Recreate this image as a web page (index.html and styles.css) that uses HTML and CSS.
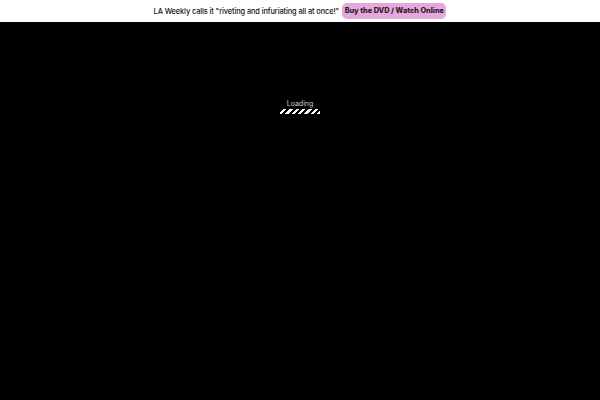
FILE: index.html
```html
<!DOCTYPE html>
<html>
<head>
<meta charset="utf-8">
<link rel="stylesheet" href="styles.css">
</head>
<body>
<div class="banner">
  <span class="quote">LA Weekly calls it "riveting and infuriating all at once!"</span>
  <a class="cta" href="#">Buy the DVD / Watch Online</a>
</div>
<main class="stage">
  <div class="loader">
    <div class="loader-text">Loading</div>
    <div class="loader-bar"></div>
  </div>
</main>
</body>
</html>
```
FILE: styles.css
```css
html, body {
  margin: 0;
  padding: 0;
  height: 100%;
  background: #000;
  font-family: "Inter", "Noto Sans", sans-serif;
}
body {
  display: flex;
  flex-direction: column;
}
.banner {
  height: 22px;
  background: #fff;
  display: flex;
  align-items: center;
  justify-content: center;
  gap: 3px;
  flex: none;
}
.quote {
  font-size: 7.4px;
  font-weight: 500;
  color: #111;
  letter-spacing: -0.1px;
}
.cta {
  font-size: 7.3px;
  font-weight: 800;
  color: #2a1a28;
  background: #e6a8dc;
  border-radius: 5px;
  padding: 3px 2.5px;
  line-height: 10px;
  text-decoration: none;
}
.stage {
  flex: 1;
  display: flex;
  justify-content: center;
  background: #000;
}
.loader {
  margin-top: 77px;
  display: flex;
  flex-direction: column;
  align-items: center;
  gap: 1px;
}
.loader-text {
  font-size: 7px;
  color: #c8c8c8;
  line-height: 9px;
}
.loader-bar {
  width: 40px;
  height: 5px;
  background: repeating-linear-gradient(-45deg, #fff 0 2.5px, #000 2.5px 4.5px);
}
```
